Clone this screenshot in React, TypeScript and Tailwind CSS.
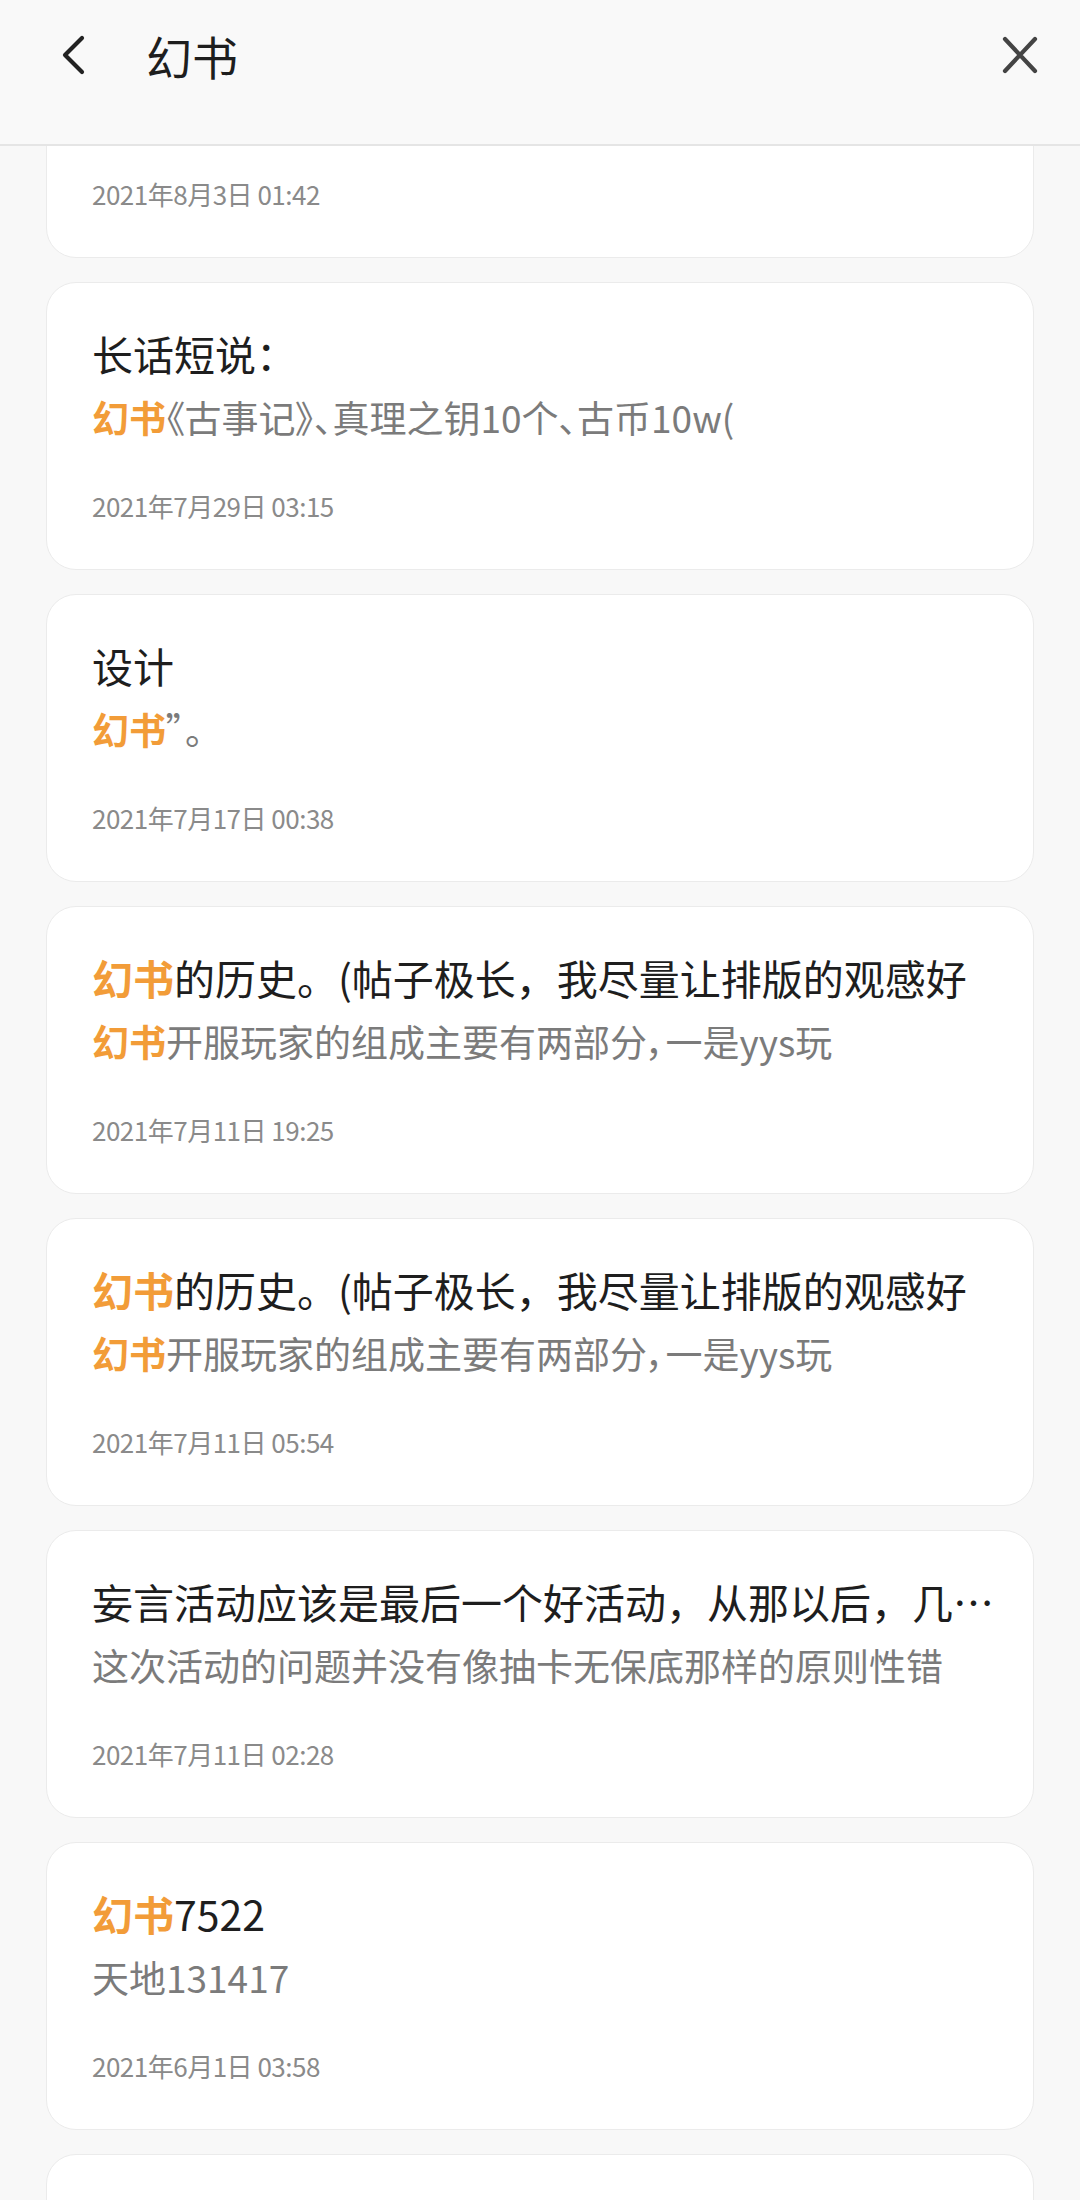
const FONT = "font-['Noto_Sans_CJK_SC','Noto_Sans',sans-serif]";

type Post = {
    title: string;
    titleHit?: boolean;
    sub: string;
    subHit?: boolean;
    date: string;
};

const posts: Post[] = [
    { title: "", sub: "", date: "2021年8月3日 01:42" },
    { title: "长话短说：", sub: "《古事记》、真理之钥10个、古币10w(", subHit: true, date: "2021年7月29日 03:15" },
    { title: "设计", sub: "”。", subHit: true, date: "2021年7月17日 00:38" },
    { title: "的历史。(帖子极长，我尽量让排版的观感好", titleHit: true, sub: "开服玩家的组成主要有两部分，一是yys玩", subHit: true, date: "2021年7月11日 19:25" },
    { title: "的历史。(帖子极长，我尽量让排版的观感好", titleHit: true, sub: "开服玩家的组成主要有两部分，一是yys玩", subHit: true, date: "2021年7月11日 05:54" },
    { title: "妄言活动应该是最后一个好活动，从那以后，几…", sub: "这次活动的问题并没有像抽卡无保底那样的原则性错", date: "2021年7月11日 02:28" },
    { title: "7522", titleHit: true, sub: "天地131417", date: "2021年6月1日 03:58" },
    { title: "", sub: "", date: "" },
];

function Hit() {
    return <span className="text-[#f29c38] font-bold">幻书</span>;
}

function PostCard({ post }: { post: Post }) {
    return (
        <div className="h-[288px] shrink-0 rounded-[30px] bg-white border border-[#ebebeb] px-[45px] pt-[40px]">
            <p className="min-h-[60px] text-[41px] leading-[60px] text-[#1e1e1e] whitespace-nowrap">
                {post.titleHit && <Hit />}
                {post.title}
            </p>
            <p className="min-h-[54px] mt-[7px] text-[37px] leading-[54px] text-[#7b7b7b] whitespace-nowrap [font-feature-settings:'palt']">
                {post.subHit && <Hit />}
                {post.sub}
            </p>
            <p className="mt-[43px] text-[26px] leading-[38px] text-[#8a8a8a] tracking-[-0.5px]">{post.date}</p>
        </div>
    );
}

export default function App() {
    return (
        <div className={`${FONT} w-[1080px] h-[2200px] bg-[#f8f8f8] flex flex-col overflow-hidden`}>
            {/* top bar */}
            <header className="h-[146px] shrink-0 bg-[#f9f9f9] border-b-2 border-[#e5e5e5]">
                <div className="h-[110px] flex items-center pl-[60px] pr-[40px]">
                    <svg width="26" height="40" viewBox="0 0 26 40" fill="none">
                        <path d="M22 3 L5 20 L22 37" stroke="#222" strokeWidth="4.2" strokeLinecap="round" strokeLinejoin="round" />
                    </svg>
                    <h1 className="ml-[60px] text-[46px] leading-[66px] text-[#1e1e1e]">幻书</h1>
                    <div className="flex-1" />
                    <svg width="40" height="40" viewBox="0 0 40 40" fill="none">
                        <path d="M5 4 L35 36 M35 4 L5 36" stroke="#444" strokeWidth="4.2" strokeLinecap="round" />
                    </svg>
                </div>
            </header>

            {/* list */}
            <div className="flex-1 overflow-hidden">
                <div className="-mt-[176px] px-[46px] flex flex-col gap-[24px]">
                    {posts.map((p, i) => (
                        <PostCard key={i} post={p} />
                    ))}
                </div>
            </div>
        </div>
    );
}
